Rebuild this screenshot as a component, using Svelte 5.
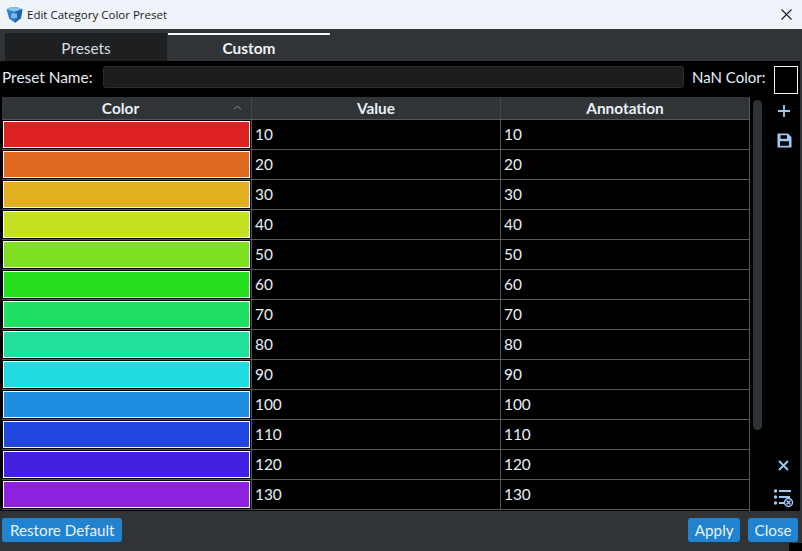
<script>
  // category colors, top to bottom
  const rows = [
    { color: '#dd2020', value: 10 },
    { color: '#e06a20', value: 20 },
    { color: '#e0b020', value: 30 },
    { color: '#c4e020', value: 40 },
    { color: '#7ee020', value: 50 },
    { color: '#26e020', value: 60 },
    { color: '#20e064', value: 70 },
    { color: '#20e09c', value: 80 },
    { color: '#20dce0', value: 90 },
    { color: '#208ee0', value: 100 },
    { color: '#2046e0', value: 110 },
    { color: '#4420e0', value: 120 },
    { color: '#8e20e0', value: 130 }
  ];
</script>

<div class="window">
  <header class="titlebar">
    <svg class="logo" width="17" height="17" viewBox="0 0 16 16">
      <path d="M0.5 3 L5 1 L11 1.5 L15.5 3 L14 11.5 L8.5 15.8 L3 12 Z" fill="#2f80d0" />
      <path d="M0.5 3 L8 5.5 L15.5 3 L11 1.5 L5 1 Z" fill="#8ec4ea" />
      <path d="M8.5 5.5 L8.5 15.8 L14 11.5 L15.5 3 Z" fill="#1d62ad" />
      <rect x="5" y="7" width="5.5" height="4.5" fill="#bfe0f5" opacity="0.6" />
    </svg>
    <span class="title">Edit Category Color Preset</span>
    <svg class="close-x" width="11" height="11" viewBox="0 0 11 11">
      <path d="M0.5 0.5 L10.5 10.5 M10.5 0.5 L0.5 10.5" stroke="#1a1a1a" stroke-width="1.1" />
    </svg>
  </header>

  <nav class="tabs">
    <div class="tab">Presets</div>
    <div class="tab active">Custom</div>
  </nav>

  <main class="content">
    <div class="name-row">
      <label for="preset-name">Preset Name:</label>
      <input id="preset-name" type="text" />
      <span class="nan-label">NaN Color:</span>
      <div class="nan-swatch"></div>
    </div>

    <div class="body-row">
      <div class="table">
        <div class="head">
          <div class="hcell sorted">
            Color
            <svg class="sort" width="9" height="5" viewBox="0 0 9 5">
              <path d="M1 4.5 L4.5 1 L8 4.5" fill="none" stroke="#8a8d8f" stroke-width="1" />
            </svg>
          </div>
          <div class="hcell">Value</div>
          <div class="hcell">Annotation</div>
        </div>
        {#each rows as row}
          <div class="row">
            <div class="cell color-cell">
              <div class="swatch" style="background: {row.color}"></div>
            </div>
            <div class="cell">{row.value}</div>
            <div class="cell">{row.value}</div>
          </div>
        {/each}
      </div>

      <div class="scroll-track"><div class="scroll-thumb"></div></div>

      <aside class="tools">
        <div class="tools-top">
          <svg width="14" height="14" viewBox="0 0 14 14">
            <path d="M7 1 V13 M1 7 H13" stroke="#9ccaf5" stroke-width="1.8" />
          </svg>
          <svg width="15" height="15" viewBox="0 0 15 15">
            <path fill-rule="evenodd" fill="#9ccaf5" d="M0.5 0.5 H11 L14.5 4 V14.5 H0.5 Z M3.5 2.2 V5.8 H10 V2.2 Z M3 8.2 V12.8 H12 V8.2 Z" />
          </svg>
        </div>
        <div class="tools-bottom">
          <svg width="11" height="11" viewBox="0 0 11 11">
            <path d="M1 1 L10 10 M10 1 L1 10" stroke="#9ccaf5" stroke-width="1.9" />
          </svg>
          <svg width="21" height="20" viewBox="0 0 21 20">
            <g fill="#9ccaf5">
              <circle cx="2.5" cy="3" r="1.7" />
              <circle cx="2.5" cy="9" r="1.7" />
              <circle cx="2.5" cy="15" r="1.7" />
              <rect x="6" y="2" width="12" height="2" />
              <rect x="6" y="8" width="11" height="2" />
              <rect x="6" y="14" width="5" height="2" />
            </g>
            <circle cx="15.5" cy="14.5" r="4" fill="none" stroke="#9ccaf5" stroke-width="1.5" />
            <path d="M13.5 12.5 L17.5 16.5 M17.5 12.5 L13.5 16.5" stroke="#9ccaf5" stroke-width="1.5" />
          </svg>
        </div>
      </aside>
    </div>
  </main>

  <footer class="footer">
    <button class="restore">Restore Default</button>
    <div class="spacer"></div>
    <button>Apply</button>
    <button>Close</button>
  </footer>
  <div class="corner"></div>
</div>

<style>
  :global(body) { margin: 0; background: #303436; overflow: hidden; }

  .window {
    position: relative;
    width: 802px;
    height: 551px;
    display: flex;
    flex-direction: column;
    font-family: Lato, sans-serif;
    font-size: 15.4px;
    color: #e4eef6;
    background: #303436;
    overflow: hidden;
  }

  .titlebar {
    height: 29px;
    flex: none;
    display: flex;
    align-items: center;
    padding: 0 10px 0 6px;
    background: #eef4f9;
    color: #1a1a1a;
    font-family: "Open Sans", sans-serif;
    font-size: 11.5px;
  }
  .logo { margin-right: 4px; }
  .title { flex: 1; }

  .tabs {
    height: 32px;
    flex: none;
    display: flex;
    align-items: flex-end;
    padding-left: 5px;
  }
  .tab {
    width: 162px;
    height: 28px;
    margin-right: 1px;
    display: flex;
    align-items: center;
    justify-content: center;
    background: #1e1f21;
    color: #d5dde4;
    box-sizing: border-box;
    padding-top: 1px;
  }
  .tab.active {
    background: #303436;
    border-top: 2px solid #f4f6f8;
    font-weight: 700;
    color: #edf3f8;
    padding-top: 0;
    padding-bottom: 1px;
  }

  .content {
    height: 450px;
    flex: none;
    margin-right: 2px;
    background: #000;
    display: flex;
    flex-direction: column;
  }

  .name-row {
    height: 36px;
    flex: none;
    display: flex;
    align-items: flex-start;
    padding: 5px 3px 0 2px;
    box-sizing: border-box;
    white-space: nowrap;
  }
  .name-row label, .nan-label { line-height: 23px; }
  .name-row label { width: 90px; flex: none; }
  .nan-label { width: 73px; flex: none; font-size: 15px; }
  input {
    width: 581px;
    height: 22px;
    flex: none;
    margin: 0 8px 0 11px;
    padding: 0;
    box-sizing: border-box;
    background: #1c1d1f;
    border: 1px solid #2b2d2f;
    border-radius: 3px;
  }
  .nan-swatch {
    width: 22px;
    height: 26px;
    flex: none;
    margin-left: 9px;
    border: 1px solid #f0f0f0;
    background: #000;
  }

  .body-row {
    flex: 1;
    display: flex;
    min-height: 0;
    padding-left: 2px;
  }

  .table {
    width: 748px;
    flex: none;
    box-sizing: border-box;
    border-right: 1px solid #55585a;
  }
  .head {
    height: 23px;
    display: grid;
    grid-template-columns: 250px 249px 248px;
    background: #303436;
    border-bottom: 1px solid #55585a;
    box-sizing: border-box;
  }
  .hcell {
    position: relative;
    display: flex;
    align-items: center;
    justify-content: center;
    font-weight: 700;
    color: #e8f0f6;
    border-right: 1px solid #45484a;
  }
  .hcell:last-child { border-right: none; }
  .hcell.sorted { padding-right: 12px; }
  .sort { position: absolute; right: 9px; top: 8px; }

  .row {
    height: 30px;
    display: grid;
    grid-template-columns: 250px 249px 248px;
    border-bottom: 1px solid #55585a;
    box-sizing: border-box;
  }
  .cell {
    display: flex;
    align-items: center;
    padding-left: 3px;
    padding-bottom: 1px;
    border-right: 1px solid #55585a;
    color: #e8f0f6;
  }
  .cell:last-child { border-right: none; }
  .color-cell { padding: 1px; }
  .swatch {
    width: 100%;
    height: 100%;
    box-sizing: border-box;
    border: 1px solid #fff;
  }

  .scroll-track {
    width: 9px;
    flex: none;
    margin-left: 3px;
    padding-top: 3px;
  }
  .scroll-thumb {
    height: 330px;
    border-radius: 5px;
    background: #2f3335;
  }

  .tools {
    flex: 1;
    display: flex;
    flex-direction: column;
    justify-content: space-between;
    align-items: center;
    padding: 7px 0 3px 0;
  }
  .tools-top { display: flex; flex-direction: column; align-items: center; gap: 15px; padding-left: 6px; }
  .tools-bottom { display: flex; flex-direction: column; align-items: center; gap: 17px; padding-left: 4px; }

  .footer {
    flex: 1;
    display: flex;
    align-items: flex-start;
    gap: 8px;
    padding: 7px 4px 0 2px;
  }
  .spacer { flex: 1; }
  button {
    height: 24px;
    padding: 0 6.5px;
    border: none;
    border-radius: 3px;
    background: #2183d0;
    color: #e8f2fa;
    font-family: Lato, sans-serif;
    font-size: 15.2px;
  }
  button.restore { padding: 0 8px; }

  /* black notch at the bottom right of the capture */
  .corner {
    position: absolute;
    right: 0;
    bottom: 0;
    width: 13px;
    height: 8px;
    background: #000;
  }
</style>
